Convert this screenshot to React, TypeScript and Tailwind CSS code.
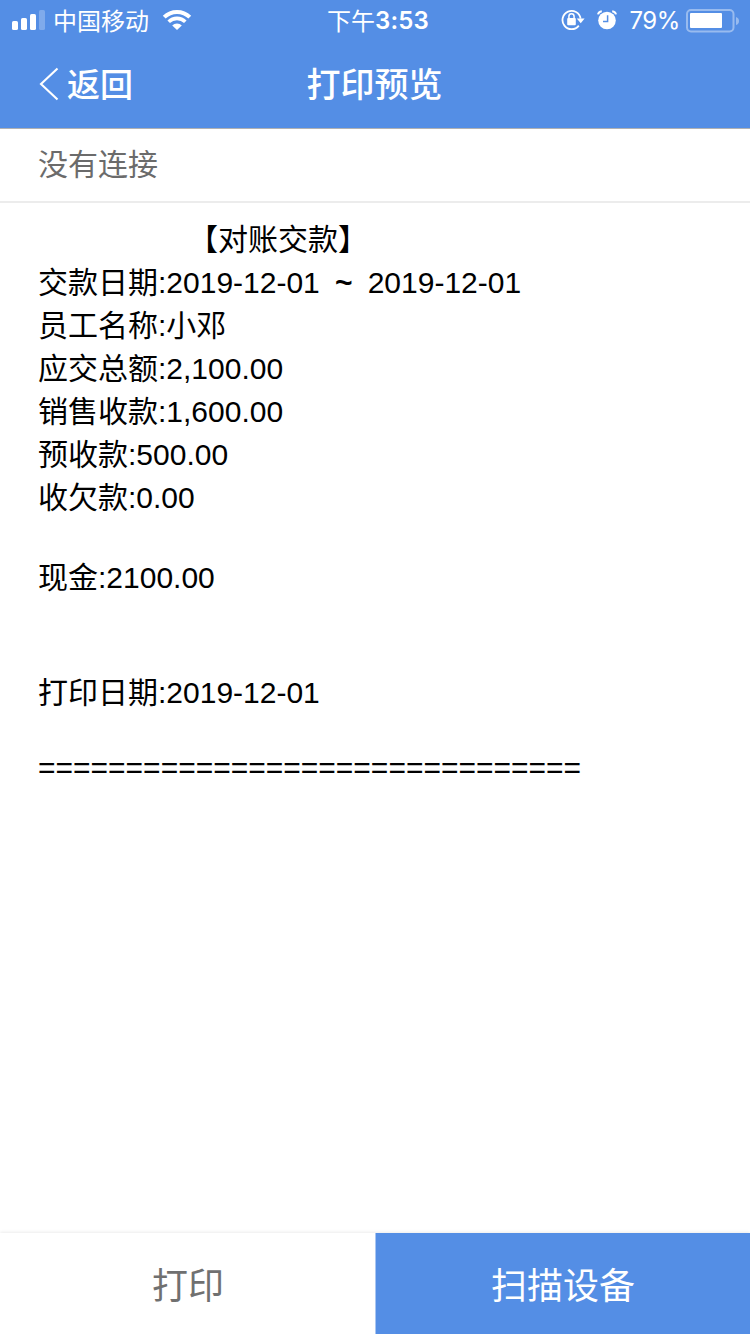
type Row = { text: string; height: string };

const SANS = "font-['Liberation_Sans','Noto_Sans_CJK_SC',sans-serif]";

const rows: Row[] = [
  { text: "员工名称:小邓", height: "h-[43px]" },
  { text: "应交总额:2,100.00", height: "h-[43px]" },
  { text: "销售收款:1,600.00", height: "h-[43px]" },
  { text: "预收款:500.00", height: "h-[43px]" },
  { text: "收欠款:0.00", height: "h-[43px]" },
  { text: "现金:2100.00", height: "mt-[37px] h-[43px]" },
  { text: "打印日期:2019-12-01", height: "mt-[72px] h-[43px]" },
  { text: "=".repeat(31), height: "mt-[32px] h-[43px]" },
];

function Signal() {
  return (
    <svg className="ml-3 mt-[10px] shrink-0" width="34" height="20" viewBox="0 0 34 20" fill="#fff">
      <rect x="0" y="11" width="6" height="9" rx="1.6" />
      <rect x="9" y="8" width="6" height="12" rx="1.6" />
      <rect x="18" y="4" width="6" height="16" rx="1.6" />
      <rect x="27" y="0" width="6" height="20" rx="1.6" opacity=".25" />
    </svg>
  );
}

function Wifi() {
  return (
    <svg className="ml-[13px] mt-[9px] shrink-0" width="30" height="22" viewBox="0 0 30 22" fill="none" stroke="#fff">
      <path d="M2.2 8.2A18.2 18.2 0 0 1 27.8 8.2" strokeWidth="4" />
      <path d="M6.7 12.8A11.8 11.8 0 0 1 23.3 12.8" strokeWidth="3.6" />
      <path d="M15 21L10.2 16.4A6.8 6.8 0 0 1 19.8 16.4Z" fill="#fff" stroke="none" />
    </svg>
  );
}

function RotationLock() {
  return (
    <svg className="mt-[9px] shrink-0" width="24" height="22" viewBox="0 0 24 22" fill="none" stroke="#fff">
      <path d="M19.6 9.6A9.1 9.1 0 1 0 17.8 16.6" strokeWidth="1.8" />
      <path d="M15.8 9.6H23.6L19.7 14.2Z" fill="#fff" stroke="none" />
      <rect x="6.2" y="9" width="8.6" height="7.2" rx="1" fill="#fff" stroke="none" />
      <path d="M7.9 9.5V7.4A2.6 2.6 0 0 1 13.1 7.4V9.5" strokeWidth="1.5" />
    </svg>
  );
}

function Alarm() {
  return (
    <svg className="ml-[12px] mt-[10px] shrink-0" width="20" height="20" viewBox="0 0 20 20" fill="none">
      <circle cx="10" cy="10.5" r="8.8" fill="#fff" />
      <path d="M10.6 5.2V11.4H6" stroke="#548ee5" strokeWidth="1.5" />
      <path d="M1 4.4Q1.6 1.6 4.8 1.2M19 4.4Q18.4 1.6 15.2 1.2" stroke="#fff" strokeWidth="2" />
    </svg>
  );
}

function Battery() {
  return (
    <svg className="ml-[6px] mt-[9px] shrink-0" width="54" height="24" viewBox="0 0 54 24" fill="none">
      <rect x="1" y="1" width="46.5" height="21.5" rx="4" stroke="#fff" strokeOpacity=".4" strokeWidth="2" />
      <rect x="4" y="4" width="32" height="15" rx="1" fill="#fff" />
      <path d="M50 8Q53 9 53 12T50 16Z" fill="#fff" fillOpacity=".4" />
    </svg>
  );
}

export default function App() {
  return (
    <div className={`${SANS} flex h-[1334px] w-[750px] flex-col overflow-hidden bg-white text-black`}>
      <header className="h-[129px] shrink-0 border-b border-[#b0b1b3] bg-[#548ee5] text-white">
        <div className="grid h-10 grid-cols-[1fr_120px_1fr] text-2xl leading-10">
          <div className="flex">
            <Signal />
            <span className="ml-[7px] font-['Noto_Sans_CJK_SC',sans-serif]">中国移动</span>
            <Wifi />
          </div>
          <div className="flex justify-center whitespace-nowrap pl-[6px] font-['Inter','Noto_Sans_CJK_SC',sans-serif] font-medium">
            <span className="font-['Noto_Sans_CJK_SC',sans-serif] font-normal">下午</span>
            <span className="pt-px font-semibold tracking-[0.2px]">3:53</span>
          </div>
          <div className="flex justify-end pr-[10px]">
            <RotationLock />
            <Alarm />
            <span className="ml-3 pt-px font-['Inter',sans-serif] tracking-[-0.4px]">79%</span>
            <Battery />
          </div>
        </div>
        <div className="grid h-[88px] grid-cols-3 items-center">
          <div className="flex items-center pl-[39px]">
            <svg width="20" height="34" viewBox="0 0 20 34" fill="none" stroke="#fff" strokeWidth="2.1">
              <path d="M18.5 1.5L2 17L18.5 32.5" />
            </svg>
            <span className="ml-2 pt-[3px] text-[33px] font-medium leading-none">返回</span>
          </div>
          <h1 className="pt-0.5 pr-px text-center text-[34px] font-medium leading-none">打印预览</h1>
        </div>
      </header>

      <div className="h-[74px] shrink-0 border-b-2 border-[#ececec] pl-[38px] text-[30px] leading-[71px] text-[#6b6b6b]">
        没有连接
      </div>

      <main className="grow whitespace-pre pl-[38px] pt-[15px] text-[30px] leading-[43px]">
        <div className="h-[43px]">{" ".repeat(18)}【对账交款】</div>
        <div className="h-[43px]">
          交款日期:2019-12-01{"  "}
          <span className="-ml-[1.5px] font-bold tracking-[-1.5px]">~</span>
          {"  "}2019-12-01
        </div>
        {rows.map((row) => (
          <div key={row.text} className={row.height}>
            {row.text}
          </div>
        ))}
      </main>

      <footer className="grid h-[101px] shrink-0 grid-cols-[375px_1fr] text-4xl shadow-[0_-1px_3px_rgba(0,0,0,0.08)]">
        <button className="pl-px pt-[7px] text-[#707070]">打印</button>
        <button className="border-l border-[#a9c6f2] bg-[#548ee5] pt-[7px] text-white">扫描设备</button>
      </footer>
    </div>
  );
}
